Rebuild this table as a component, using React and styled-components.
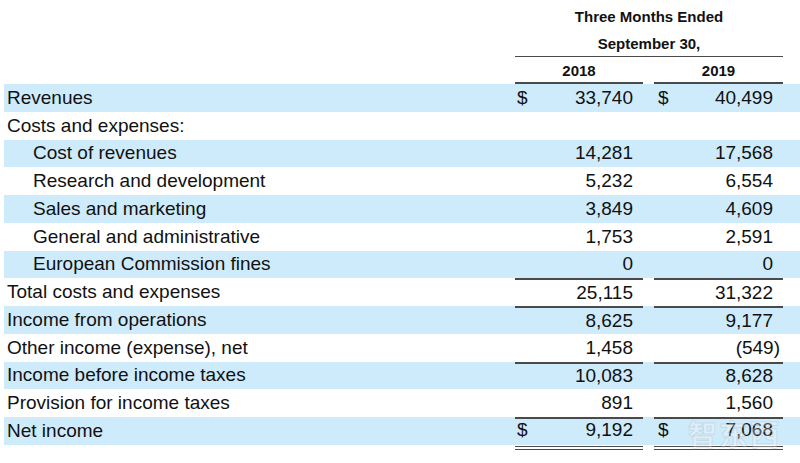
import React from "react";
import styled, { createGlobalStyle } from "styled-components";

const GlobalStyle = createGlobalStyle`
	html, body {
		margin: 0;
		padding: 0;
		background: #ffffff;
	}
	body {
		font-family: "Liberation Sans", Arial, sans-serif;
		color: #111111;
	}
`;

const BAND = "#cdebfb";
const LINE = "#4a4a4a";

const Page = styled.div`
	position: relative;
	width: 800px;
	height: 463px;
	padding-left: 4px;
	box-sizing: border-box;
	overflow: hidden;
`;

const HeaderGrid = styled.div`
	display: grid;
	grid-template-columns: 511px 128px 11px 129px 2px;
`;

const PeriodTitle = styled.div`
	grid-column: 2 / 5;
	display: flex;
	align-items: center;
	justify-content: center;
	height: ${(p) => p.$height}px;
	box-sizing: border-box;
	font-weight: bold;
	font-size: 15px;
	padding-top: ${(p) => p.$top || 0}px;
	border-bottom: ${(p) => (p.$underline ? `1px solid ${LINE}` : "none")};
`;

const YearCell = styled.div`
	grid-column: ${(p) => p.$col};
	height: 27px;
	box-sizing: border-box;
	display: flex;
	align-items: center;
	justify-content: center;
	padding-top: 2px;
	font-weight: bold;
	font-size: 15px;
	border-bottom: 2px solid ${LINE};
`;

const Row = styled.div`
	display: grid;
	grid-template-columns: 511px 128px 11px 129px 2px;
	height: 27.75px;
	background: ${(p) => (p.$shaded ? BAND : "transparent")};
	font-size: 19px;
`;

const Label = styled.div`
	display: flex;
	align-items: center;
	padding-left: ${(p) => (p.$indent ? 29 : 3)}px;
	white-space: nowrap;
`;

const Amount = styled.div`
	display: flex;
	align-items: center;
	justify-content: space-between;
	box-sizing: border-box;
	padding: 0 10px 0 ${(p) => p.$dollarPad}px;
	border-top: ${(p) => (p.$ruled ? `2px solid ${LINE}` : "none")};
	border-bottom: ${(p) => (p.$double ? `4px double ${LINE}` : "none")};
	margin-bottom: ${(p) => (p.$double ? -5 : 0)}px;
	height: ${(p) => (p.$double ? "calc(100% + 5px)" : "auto")};
	padding-bottom: ${(p) => (p.$double ? 5 : 0)}px;
`;

const Number = styled.span`
	margin-left: auto;
	white-space: nowrap;
`;

const Hang = styled.span`
	margin-right: -7px;
`;

const Watermark = styled.div`
	position: absolute;
	left: 688px;
	top: 412px;
	font-family: "Noto Sans CJK SC", sans-serif;
	font-size: 29px;
	font-weight: bold;
	letter-spacing: 2px;
	color: rgba(255, 255, 255, 0.3);
	-webkit-text-stroke: 1px rgba(160, 160, 160, 0.25);
	pointer-events: none;
`;

const rows = [
	{ label: "Revenues", a: "33,740", b: "40,499", dollar: true, shaded: true },
	{ label: "Costs and expenses:" },
	{ label: "Cost of revenues", a: "14,281", b: "17,568", indent: true, shaded: true },
	{ label: "Research and development", a: "5,232", b: "6,554", indent: true },
	{ label: "Sales and marketing", a: "3,849", b: "4,609", indent: true, shaded: true },
	{ label: "General and administrative", a: "1,753", b: "2,591", indent: true },
	{ label: "European Commission fines", a: "0", b: "0", indent: true, shaded: true },
	{ label: "Total costs and expenses", a: "25,115", b: "31,322", ruled: true },
	{ label: "Income from operations", a: "8,625", b: "9,177", ruled: true, shaded: true },
	{ label: "Other income (expense), net", a: "1,458", b: "-549" },
	{ label: "Income before income taxes", a: "10,083", b: "8,628", ruled: true, shaded: true },
	{ label: "Provision for income taxes", a: "891", b: "1,560" },
	{ label: "Net income", a: "9,192", b: "7,068", dollar: true, ruled: true, double: true, shaded: true },
];

function Value({ v }) {
	if (v === undefined) return null;
	if (v.startsWith("-")) {
		return (
			<Number>
				({v.slice(1)}
				<Hang>)</Hang>
			</Number>
		);
	}
	return <Number>{v}</Number>;
}

export default function App() {
	return (
		<Page>
			<GlobalStyle />
			<HeaderGrid>
				<PeriodTitle $height={30} $top={2}>Three Months Ended</PeriodTitle>
				<PeriodTitle $height={27} $underline>September 30,</PeriodTitle>
				<YearCell $col={2}>2018</YearCell>
				<YearCell $col={4}>2019</YearCell>
			</HeaderGrid>
			{rows.map((r) => (
				<Row key={r.label} $shaded={r.shaded}>
					<Label $indent={r.indent}>{r.label}</Label>
					<Amount $dollarPad={2} $ruled={r.ruled} $double={r.double}>
						{r.dollar && <span>$</span>}
						<Value v={r.a} />
					</Amount>
					<div />
					<Amount $dollarPad={4} $ruled={r.ruled} $double={r.double}>
						{r.dollar && <span>$</span>}
						<Value v={r.b} />
					</Amount>
					<div />
				</Row>
			))}
			<Watermark>智东西</Watermark>
		</Page>
	);
}
